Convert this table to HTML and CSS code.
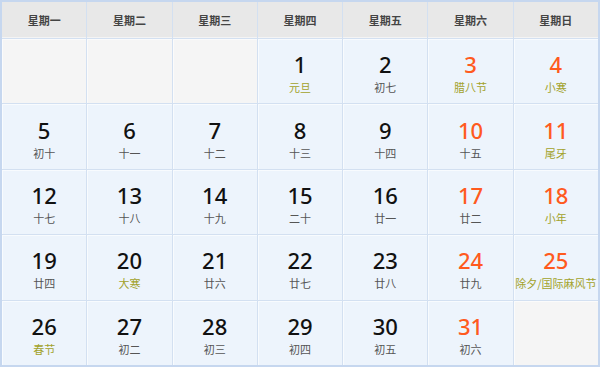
FILE: index.html
```html
<!DOCTYPE html>
<html lang="zh">
<head>
<meta charset="utf-8">
<link rel="stylesheet" href="styles.css">
</head>
<body>
<div class="cal">
  <div class="hd">星期一</div>
  <div class="hd">星期二</div>
  <div class="hd">星期三</div>
  <div class="hd">星期四</div>
  <div class="hd">星期五</div>
  <div class="hd">星期六</div>
  <div class="hd">星期日</div>

  <div class="cell empty"></div>
  <div class="cell empty"></div>
  <div class="cell empty"></div>
  <div class="cell"><span class="num">1</span><span class="lunar fest">元旦</span></div>
  <div class="cell"><span class="num">2</span><span class="lunar">初七</span></div>
  <div class="cell we"><span class="num">3</span><span class="lunar fest">腊八节</span></div>
  <div class="cell we"><span class="num">4</span><span class="lunar fest">小寒</span></div>

  <div class="cell"><span class="num">5</span><span class="lunar">初十</span></div>
  <div class="cell"><span class="num">6</span><span class="lunar">十一</span></div>
  <div class="cell"><span class="num">7</span><span class="lunar">十二</span></div>
  <div class="cell"><span class="num">8</span><span class="lunar">十三</span></div>
  <div class="cell"><span class="num">9</span><span class="lunar">十四</span></div>
  <div class="cell we"><span class="num">10</span><span class="lunar">十五</span></div>
  <div class="cell we"><span class="num">11</span><span class="lunar fest">尾牙</span></div>

  <div class="cell"><span class="num">12</span><span class="lunar">十七</span></div>
  <div class="cell"><span class="num">13</span><span class="lunar">十八</span></div>
  <div class="cell"><span class="num">14</span><span class="lunar">十九</span></div>
  <div class="cell"><span class="num">15</span><span class="lunar">二十</span></div>
  <div class="cell"><span class="num">16</span><span class="lunar">廿一</span></div>
  <div class="cell we"><span class="num">17</span><span class="lunar">廿二</span></div>
  <div class="cell we"><span class="num">18</span><span class="lunar fest">小年</span></div>

  <div class="cell"><span class="num">19</span><span class="lunar">廿四</span></div>
  <div class="cell"><span class="num">20</span><span class="lunar fest">大寒</span></div>
  <div class="cell"><span class="num">21</span><span class="lunar">廿六</span></div>
  <div class="cell"><span class="num">22</span><span class="lunar">廿七</span></div>
  <div class="cell"><span class="num">23</span><span class="lunar">廿八</span></div>
  <div class="cell we"><span class="num">24</span><span class="lunar">廿九</span></div>
  <div class="cell we"><span class="num">25</span><span class="lunar fest">除夕/国际麻风节</span></div>

  <div class="cell"><span class="num">26</span><span class="lunar fest">春节</span></div>
  <div class="cell"><span class="num">27</span><span class="lunar">初二</span></div>
  <div class="cell"><span class="num">28</span><span class="lunar">初三</span></div>
  <div class="cell"><span class="num">29</span><span class="lunar">初四</span></div>
  <div class="cell"><span class="num">30</span><span class="lunar">初五</span></div>
  <div class="cell we"><span class="num">31</span><span class="lunar">初六</span></div>
  <div class="cell empty"></div>
</div>
</body>
</html>
```

FILE: styles.css
```css
html, body {
  margin: 0;
  padding: 0;
  background: #ffffff;
}
.cal {
  box-sizing: border-box;
  width: 600px;
  height: 367px;
  border: 2px solid #c6d7ef;
  background: #d3e0f1;
  display: grid;
  grid-template-columns: repeat(7, 1fr);
  grid-template-rows: 36px repeat(5, 1fr);
  gap: 1px;
  font-family: "Noto Sans CJK SC", "Noto Sans", sans-serif;
}
.hd {
  background: #e8e8e8;
  color: #444444;
  font-size: 11px;
  font-weight: bold;
  display: flex;
  align-items: center;
  justify-content: center;
  box-shadow: inset 0 -1px 0 #f4f4f4;
}
.cell {
  background: #edf4fc;
  display: flex;
  flex-direction: column;
  align-items: center;
  justify-content: center;
  box-shadow: inset 1px 1px 0 #f8fbfe;
  padding-top: 2px;
}
.cell.empty {
  background: #f5f5f5;
  box-shadow: inset 1px 1px 0 #fbfbfb;
}
.num {
  font-family: "Noto Sans", sans-serif;
  font-size: 22px;
  font-weight: 500;
  line-height: 30px;
  color: #111111;
}
.we .num {
  color: #ff5a1e;
}
.lunar {
  font-size: 11px;
  line-height: 16px;
  color: #555555;
  white-space: nowrap;
}
.lunar.fest {
  color: #a2a22a;
}
```
